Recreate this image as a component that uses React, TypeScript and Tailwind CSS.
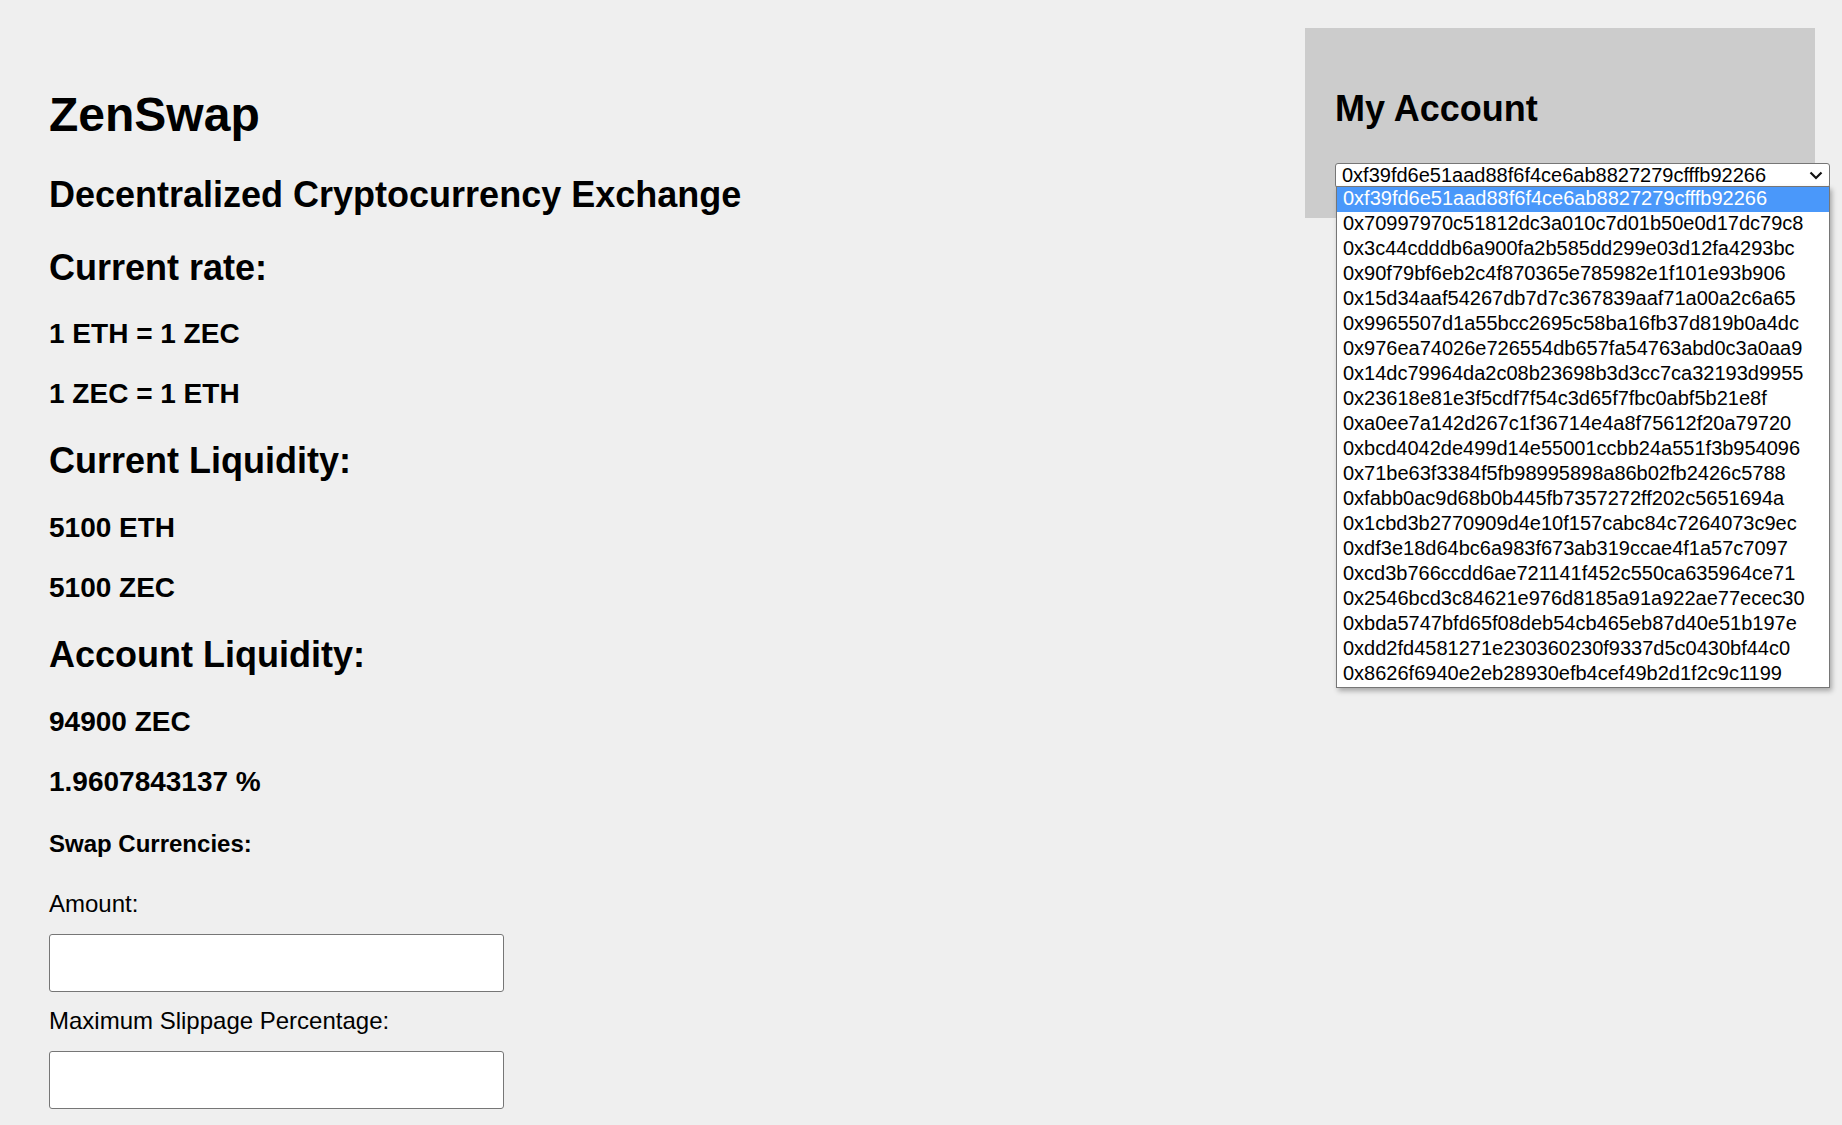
import React from 'react';

const accounts = [
  '0xf39fd6e51aad88f6f4ce6ab8827279cfffb92266',
  '0x70997970c51812dc3a010c7d01b50e0d17dc79c8',
  '0x3c44cdddb6a900fa2b585dd299e03d12fa4293bc',
  '0x90f79bf6eb2c4f870365e785982e1f101e93b906',
  '0x15d34aaf54267db7d7c367839aaf71a00a2c6a65',
  '0x9965507d1a55bcc2695c58ba16fb37d819b0a4dc',
  '0x976ea74026e726554db657fa54763abd0c3a0aa9',
  '0x14dc79964da2c08b23698b3d3cc7ca32193d9955',
  '0x23618e81e3f5cdf7f54c3d65f7fbc0abf5b21e8f',
  '0xa0ee7a142d267c1f36714e4a8f75612f20a79720',
  '0xbcd4042de499d14e55001ccbb24a551f3b954096',
  '0x71be63f3384f5fb98995898a86b02fb2426c5788',
  '0xfabb0ac9d68b0b445fb7357272ff202c5651694a',
  '0x1cbd3b2770909d4e10f157cabc84c7264073c9ec',
  '0xdf3e18d64bc6a983f673ab319ccae4f1a57c7097',
  '0xcd3b766ccdd6ae721141f452c550ca635964ce71',
  '0x2546bcd3c84621e976d8185a91a922ae77ecec30',
  '0xbda5747bfd65f08deb54cb465eb87d40e51b197e',
  '0xdd2fd4581271e230360230f9337d5c0430bf44c0',
  '0x8626f6940e2eb28930efb4cef49b2d1f2c9c1199',
];

function AccountSelect() {
  return (
    <div className="relative mt-[34px] w-[495px]">
      {/* closed select */}
      <div className="flex h-[25px] items-start justify-between rounded-[3px] border border-[#767676] bg-white pl-[6px] pr-[6px]">
        <span className="text-[20px] leading-[23px]">{accounts[0]}</span>
        <svg width="14" height="9" viewBox="0 0 14 9" className="mt-[7px]">
          <path d="M1.5 1.5 L7 7 L12.5 1.5" fill="none" stroke="#111" strokeWidth="2.2" />
        </svg>
      </div>
      {/* open popup list */}
      <div className="absolute left-[1px] top-[23px] z-10 w-[494px] border border-[#767676] bg-white shadow-[2px_3px_5px_rgba(0,0,0,0.3)]">
        {accounts.map((a, i) => (
          <div
            key={a}
            className={
              i === 0
                ? 'h-[25px] bg-[#4a98fa] pl-[6px] pt-[1px] text-[20px] leading-[20px] text-white'
                : 'h-[25px] pl-[6px] pt-[1px] text-[20px] leading-[20px] text-black'
            }
          >
            {a}
          </div>
        ))}
      </div>
    </div>
  );
}

export default function App() {
  return (
    <div className="min-h-screen overflow-hidden bg-[#efefef] font-['Liberation_Sans',Arial,sans-serif] text-black">
      <div className="flex justify-between">
        {/* left column */}
        <div className="flex flex-col pl-[49px] pt-[87px]">
          <h1 className="text-[48px] font-bold leading-[1.15]">ZenSwap</h1>
          <h2 className="mt-[32px] text-[36px] font-bold leading-[1.15]">Decentralized Cryptocurrency Exchange</h2>
          <h2 className="mt-[31px] text-[36px] font-bold leading-[1.15]">Current rate:</h2>
          <h3 className="mt-[30px] text-[28px] font-bold leading-[1.15]">1 ETH = 1 ZEC</h3>
          <h3 className="mt-[28px] text-[28px] font-bold leading-[1.15]">1 ZEC = 1 ETH</h3>
          <h2 className="mt-[30px] text-[36px] font-bold leading-[1.15]">Current Liquidity:</h2>
          <h3 className="mt-[30px] text-[28px] font-bold leading-[1.15]">5100 ETH</h3>
          <h3 className="mt-[28px] text-[28px] font-bold leading-[1.15]">5100 ZEC</h3>
          <h2 className="mt-[30px] text-[36px] font-bold leading-[1.15]">Account Liquidity:</h2>
          <h3 className="mt-[30px] text-[28px] font-bold leading-[1.15]">94900 ZEC</h3>
          <h3 className="mt-[28px] text-[28px] font-bold leading-[1.15]">1.9607843137 %</h3>
          <h4 className="mt-[32px] text-[24px] font-bold leading-[1.15]">Swap Currencies:</h4>
          <label className="mt-[33px] text-[24px] leading-[1.15]">Amount:</label>
          <input className="mt-[16px] h-[58px] w-[455px] rounded-[3px] border border-[#767676] bg-white" />
          <label className="mt-[15px] text-[24px] leading-[1.15]">Maximum Slippage Percentage:</label>
          <input className="mt-[16px] h-[58px] w-[455px] rounded-[3px] border border-[#767676] bg-white" />
        </div>

        {/* account panel */}
        <div className="mr-[27px] mt-[28px] h-[190px] w-[510px] bg-[#cccccc] px-[30px] pt-[30px]">
          <h2 className="mt-[30px] text-[36px] font-bold leading-[1.15]">My Account</h2>
          <AccountSelect />
        </div>
      </div>
    </div>
  );
}
